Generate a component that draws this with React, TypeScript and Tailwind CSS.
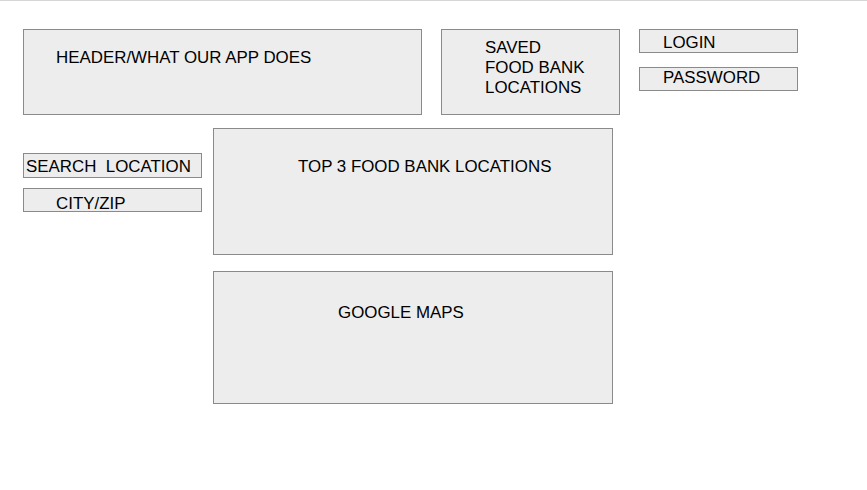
import React from 'react';

const box = 'border border-[#8a8a8a] bg-[#ededed] text-black';

const App = () => {
	return (
		<div className="min-h-screen w-full bg-white font-['Liberation_Sans',Arial,sans-serif] text-[16.9px] text-black">
			<div className="border-t border-[#d6d6d6]" />

			{/* top row */}
			<div className="flex items-start pl-[23px] pt-[28px]">
				<div className={`${box} h-[86px] w-[399px] pl-[32px] pt-[18px] leading-[20px]`}>
					HEADER/WHAT OUR APP DOES
				</div>
				<div className={`${box} ml-[19px] h-[86px] w-[179px] pl-[43px] pt-[8px] leading-[20px]`}>
					SAVED
					<br />
					FOOD BANK
					<br />
					LOCATIONS
				</div>
				<div className="ml-[19px] flex w-[159px] flex-col">
					<div className={`${box} h-[24px] pl-[23px] pt-[4px] leading-[18px]`}>LOGIN</div>
					<div className={`${box} mt-[14px] h-[24px] pl-[23px] pt-[1px] leading-[18px]`}>PASSWORD</div>
				</div>
			</div>

			{/* search + results */}
			<div className="mt-[13px] flex items-start pl-[23px]">
				<div className="mt-[25px] flex w-[179px] flex-col">
					<div className={`${box} h-[25px] whitespace-pre pl-[2px] pt-[4px] leading-[18px]`}>
						SEARCH  LOCATION
					</div>
					<div className={`${box} mt-[10px] h-[24px] pl-[32px] pt-[6px] leading-[18px]`}>CITY/ZIP</div>
				</div>
				<div className="ml-[11px] flex w-[400px] flex-col">
					<div className={`${box} h-[127px] pl-[84px] pt-[28px] leading-[20px]`}>
						TOP 3 FOOD BANK LOCATIONS
					</div>
					<div className={`${box} mt-[16px] h-[133px] pl-[124px] pt-[31px] leading-[20px]`}>
						GOOGLE MAPS
					</div>
				</div>
			</div>
		</div>
	);
};

export default App;
